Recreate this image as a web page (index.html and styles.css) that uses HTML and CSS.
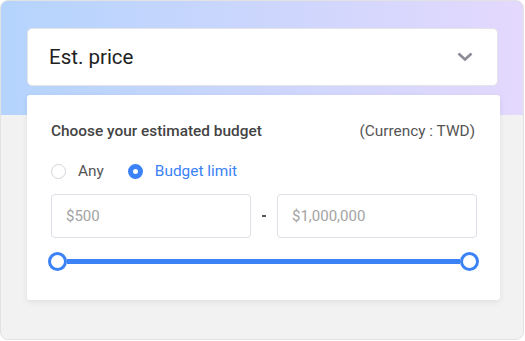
FILE: index.html
```html
<!DOCTYPE html>
<html>
<head>
  <title>Est. price</title>
  <link rel="stylesheet" href="styles.css">
</head>
<body>
  <div class="widget">
    <div class="select">
      <span class="select-label">Est. price</span>
      <svg class="chevron" width="16" height="10" viewBox="0 0 16 10">
        <polyline points="1.5,1.5 8,7.5 14.5,1.5" fill="none" stroke="#8b8b96" stroke-width="2.6" />
      </svg>
    </div>

    <div class="panel">
      <div class="panel-head">
        <span class="panel-title">Choose your estimated budget</span>
        <span class="currency">(Currency : TWD)</span>
      </div>

      <div class="radios">
        <label class="radio">
          <span class="radio-dot"></span>
          <span>Any</span>
        </label>
        <label class="radio radio-checked">
          <span class="radio-dot"></span>
          <span>Budget limit</span>
        </label>
      </div>

      <div class="range-inputs">
        <div class="field">$500</div>
        <div class="dash"></div>
        <div class="field">$1,000,000</div>
      </div>

      <div class="slider">
        <span class="thumb"></span>
        <span class="track"></span>
        <span class="thumb"></span>
      </div>
    </div>
  </div>
</body>
</html>
```

FILE: styles.css
```css
body {
  margin: 0;
  font-family: Roboto, "Liberation Sans", Arial, sans-serif;
}

.widget {
  box-sizing: border-box;
  width: 524px;
  height: 340px;
  padding: 27px 23px 0 26px;
  border: 1px solid #e2e2e2;
  border-radius: 8px;
  background: linear-gradient(90deg, #b4d4fd, #e4d8fd) top left / 100% 114px no-repeat, #f2f2f2;
}

.select {
  display: flex;
  align-items: center;
  justify-content: space-between;
  box-sizing: border-box;
  height: 58px;
  margin-right: 2px;
  padding: 0 24px 0 21px;
  background-color: white;
  border: 1px solid #e4e4e8;
  border-radius: 5px;
}

.select-label {
  font-size: 20.5px;
  color: #222;
}

.chevron {
  display: block;
}

.panel {
  margin-top: 9px;
  padding: 26px 23px 29px 24px;
  background-color: white;
  border-radius: 3px;
  box-shadow: 0 2px 6px rgba(0,0,0,0.08);
}

.panel-head {
  display: flex;
  justify-content: space-between;
  font-size: 15.4px;
  line-height: 20px;
  padding-right: 2px;
}

.panel-title {
  font-weight: 500;
  color: #444;
}

.currency {
  color: #555;
}

.radios {
  display: flex;
  gap: 24px;
  margin-top: 20px;
  font-size: 15.4px;
  line-height: 20px;
  color: #555;
}

.radio {
  display: flex;
  align-items: center;
  gap: 12px;
}

.radio-dot {
  box-sizing: border-box;
  width: 15px;
  height: 15px;
  border: 1px solid #d4d4dc;
  border-radius: 50%;
}

.radio-checked {
  color: #3b82f6;
}

.radio-checked .radio-dot {
  border: 5px solid #3b82f6;
  background-color: white;
}

.range-inputs {
  display: grid;
  grid-template-columns: 1fr 4px 1fr;
  align-items: center;
  column-gap: 11px;
  margin-top: 13px;
}

.field {
  box-sizing: border-box;
  height: 44px;
  padding: 0 14px;
  border: 1px solid #dedee6;
  border-radius: 4px;
  font-size: 15px;
  line-height: 42px;
  color: #a3a3a3;
}

.dash {
  height: 2px;
  background-color: #555;
}

.slider {
  display: flex;
  align-items: center;
  margin: 14px -2px 0 -3px;
}

.thumb {
  box-sizing: border-box;
  width: 19px;
  height: 19px;
  border: 3px solid #3b82f6;
  border-radius: 50%;
  background-color: white;
}

.track {
  flex: 1;
  height: 5px;
  background-color: #3b82f6;
}
```
